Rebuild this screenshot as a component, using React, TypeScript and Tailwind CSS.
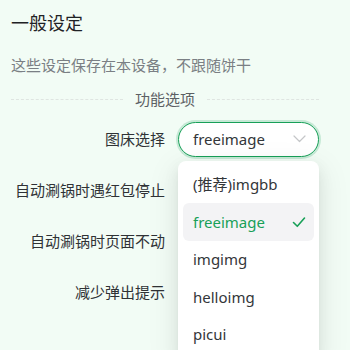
import React from "react";

const font = { fontFamily: '"Noto Sans", "Noto Sans CJK SC", sans-serif' };

function Switch() {
  return (
    <div className="h-[22px] w-[40px] rounded-full bg-[#d6ddd8] flex items-center px-[2px]">
      <div className="h-[18px] w-[18px] rounded-full bg-white" />
    </div>
  );
}

function Row({ label, children }: { label: string; children: React.ReactNode }) {
  return (
    <div className="grid grid-cols-[154px_1fr] gap-x-[13px] h-[51px] items-center">
      <div className="text-right text-[15px] leading-[22px] text-[#2f3235]">{label}</div>
      <div className="relative h-full flex items-center">{children}</div>
    </div>
  );
}

const options = ["(推荐)imgbb", "freeimage", "imgimg", "helloimg", "picui"];

export default function App() {
  return (
    <div className="w-[350px] h-[350px] overflow-hidden bg-[#f2fcf5]" style={font}>
      <div className="ml-[11px] w-[308px] pt-[10px]">
        <div className="h-[26px] leading-[26px] text-[18px] text-[#1f2225]">一般设定</div>
        <div className="mt-[18px] h-[22px] leading-[22px] text-[15px] text-[#7a7f84]">
          这些设定保存在本设备，不跟随饼干
        </div>
        <div className="mt-[12px] h-[22px] flex items-center">
          <div className="flex-1 border-t border-dashed border-[#dfe5e1]" />
          <div className="px-[12px] text-[15px] leading-[22px] text-[#5c6064]">功能选项</div>
          <div className="flex-1 border-t border-dashed border-[#dfe5e1]" />
        </div>
        <div className="mt-[3.5px]">
          <Row label="图床选择">
            <div className="relative w-[141px]">
              <div className="h-[35px] w-full rounded-full border border-[#18a058] bg-white shadow-[0_0_0_2px_rgba(24,160,88,0.2)] flex items-center pl-[14px] pr-[12px]">
                <span className="flex-1 text-[15px] text-[#333639]">freeimage</span>
                <svg width="13" height="8" viewBox="0 0 13 8" fill="none">
                  <path d="M1 1l5.5 5.5L12 1" stroke="#c4c6c8" strokeWidth="1.2" strokeLinecap="round" strokeLinejoin="round" />
                </svg>
              </div>
              <div className="absolute z-10 left-0 top-[39px] w-[141px] rounded-[8px] bg-white px-[5px] pt-[5px] pb-[5px] shadow-[0_3px_6px_-4px_rgba(0,0,0,0.12),0_6px_16px_0_rgba(0,0,0,0.08),0_9px_28px_8px_rgba(0,0,0,0.05)]">
                {options.map((o) => {
                  const sel = o === "freeimage";
                  return (
                    <div
                      key={o}
                      className={
                        sel
                          ? "h-[37.5px] rounded-[6px] bg-[#f3f3f5] flex items-center pl-[10px] pr-[8px] text-[15px] text-[#18a058]"
                          : "h-[37.5px] rounded-[6px] flex items-center pl-[10px] pr-[8px] text-[15px] text-[#333639]"
                      }
                    >
                      <span className="flex-1">{o}</span>
                      {sel && (
                        <svg width="14" height="12" viewBox="0 0 14 12" fill="none">
                          <path d="M1.5 6.5l3.8 3.8L12.5 2" stroke="#18a058" strokeWidth="1.6" strokeLinecap="round" strokeLinejoin="round" />
                        </svg>
                      )}
                    </div>
                  );
                })}
              </div>
            </div>
          </Row>
          <Row label="自动涮锅时遇红包停止">
            <Switch />
          </Row>
          <Row label="自动涮锅时页面不动">
            <Switch />
          </Row>
          <Row label="减少弹出提示">
            <Switch />
          </Row>
        </div>
      </div>
    </div>
  );
}
